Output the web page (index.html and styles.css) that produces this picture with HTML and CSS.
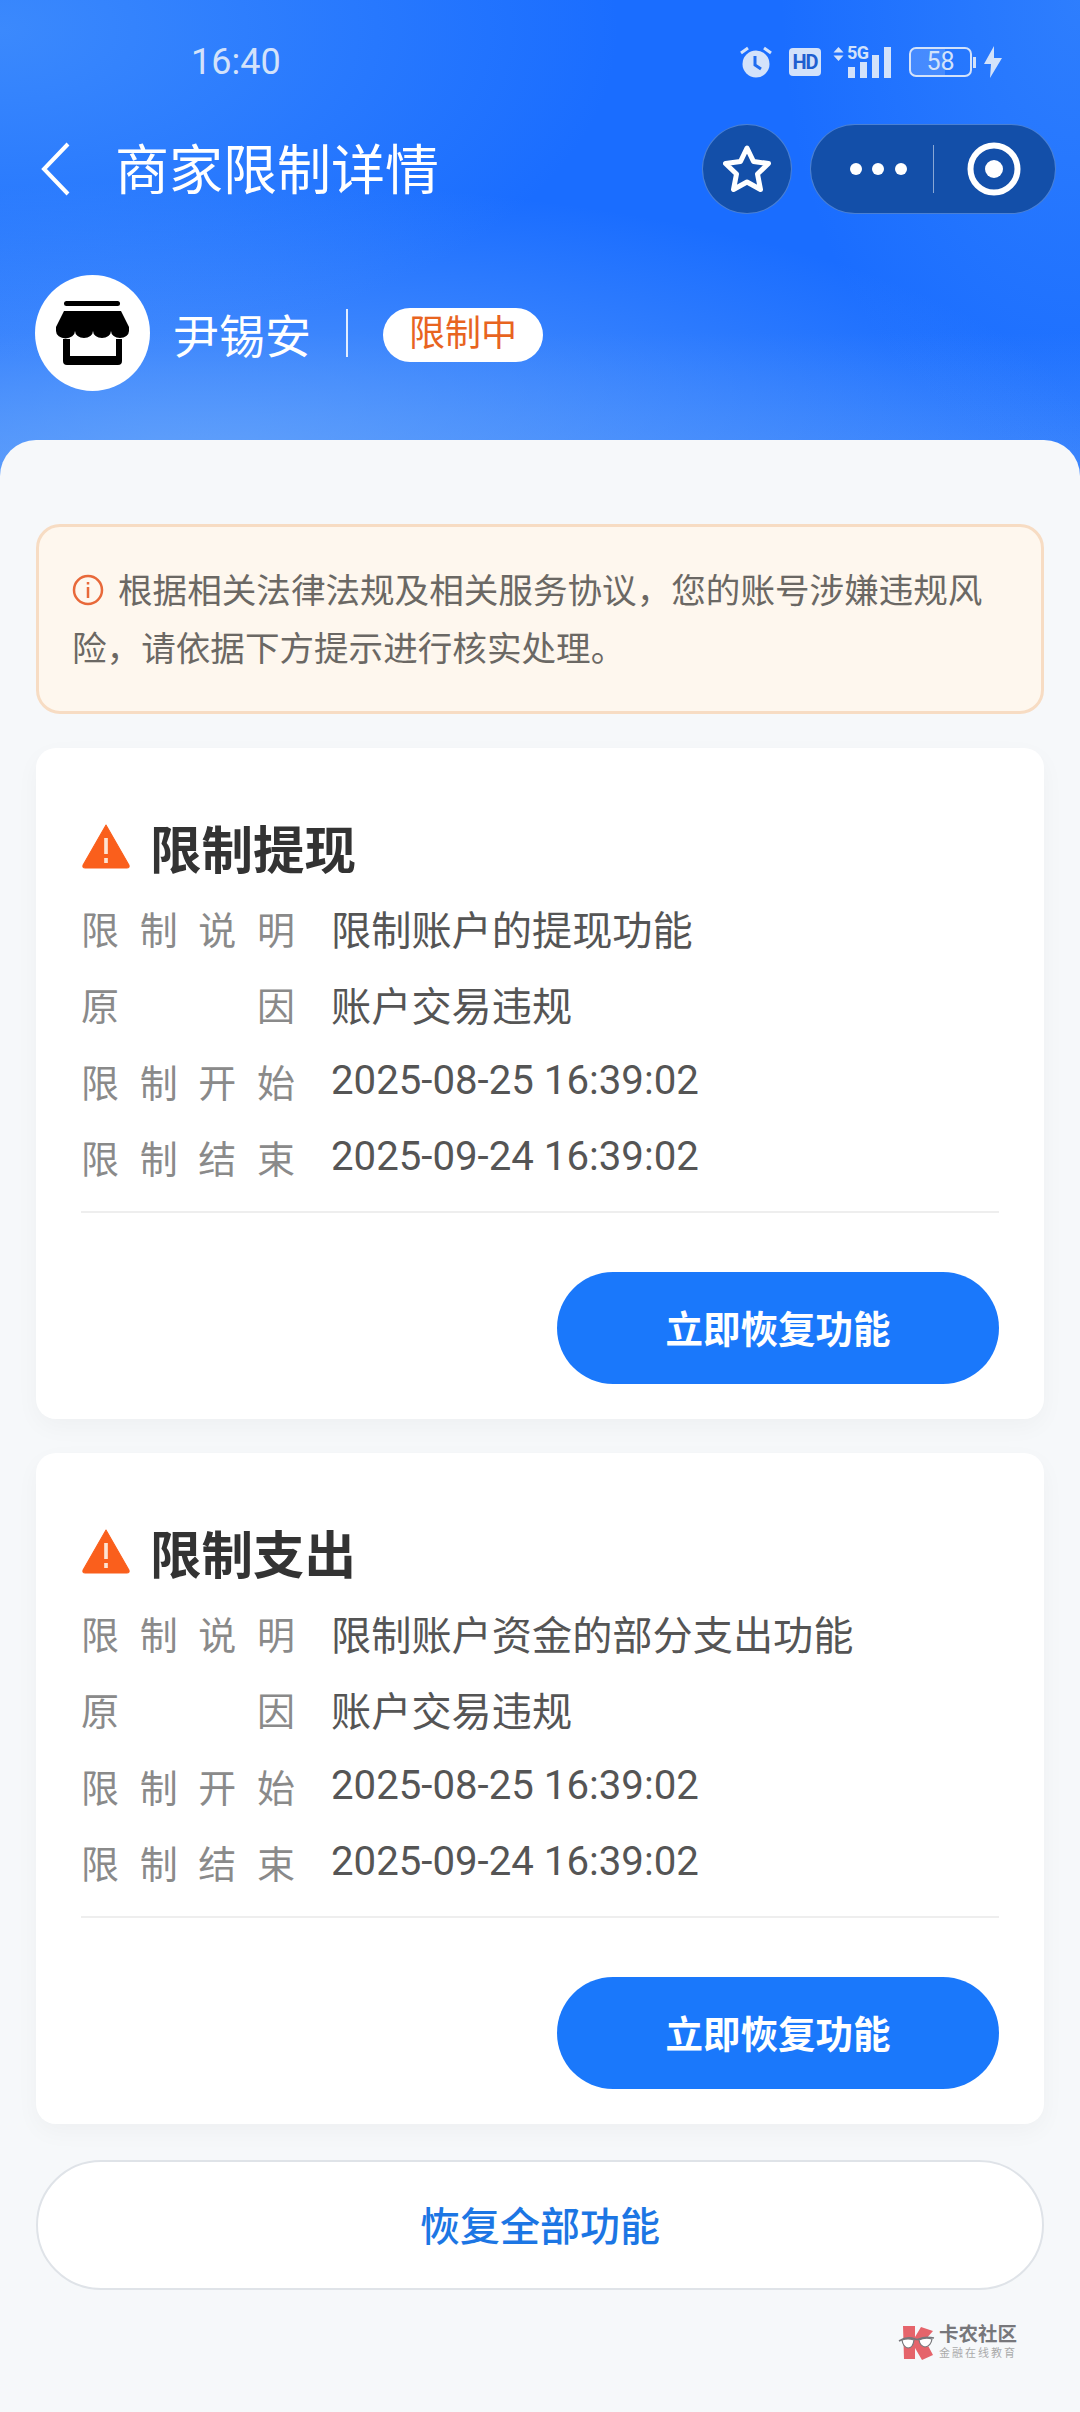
FILE: index.html
```html
<!DOCTYPE html>
<html lang="zh-CN">
<head>
    <meta charset="UTF-8">
    <meta name="viewport" content="width=device-width, initial-scale=1.0">
    <title>商家限制详情</title>
    <link rel="stylesheet" href="styles.css">
</head>
<body>
    <div class="page">
        <header class="top">
            <div class="status-bar">
                <span class="time">16:40</span>
                <div class="status-icons">
                    <svg class="icon-alarm" width="34" height="34" viewBox="0 0 34 34">
                        <circle cx="17" cy="19" r="13.5" fill="#d3e2fa"/>
                        <path d="M16 11v9l6 4" fill="none" stroke="#1f6cf0" stroke-width="3"/>
                        <path d="M2 8l7-5M32 8l-7-5" stroke="#d3e2fa" stroke-width="3" fill="none"/>
                    </svg>
                    <span class="hd">HD</span>
                    <div class="signal">
                        <svg width="11" height="14" viewBox="0 0 11 14">
                            <path d="M5.500 0L10.500 5.500H0.500ZM0.500 8.500H10.500L5.500 14Z" fill="#d3e2fa"/>
                        </svg>
                        <span class="five-g">5G</span>
                        <svg class="bars" width="44" height="31" viewBox="0 0 44 31">
                            <rect x="1" y="20" width="7" height="11" fill="#d3e2fa"/>
                            <rect x="13" y="15" width="7" height="16" fill="#d3e2fa"/>
                            <rect x="25" y="8" width="7" height="23" fill="#d3e2fa"/>
                            <rect x="37" y="0" width="7" height="31" fill="#d3e2fa"/>
                        </svg>
                    </div>
                    <div class="battery"><span>58</span></div>
                    <i class="battery-nub"></i>
                    <svg class="bolt" width="20" height="32" viewBox="0 0 20 32">
                        <path d="M11 0L1 18H8L7 32L19 12H11Z" fill="#d3e2fa"/>
                    </svg>
                </div>
            </div>

            <nav class="nav">
                <svg class="back" width="30" height="54" viewBox="0 0 30 54">
                    <path d="M27 2L3 27L27 52" fill="none" stroke="#fff" stroke-width="4"/>
                </svg>
                <h1>商家限制详情</h1>
                <div class="nav-actions">
                    <div class="star-btn">
                        <svg width="48" height="48" viewBox="0 0 48 48">
                            <path d="M24 3L30.500 16.500L45.500 18.500L34.500 29L37.500 44.500L24 37L10.500 44.500L13.500 29L2.500 18.500L17.500 16.500Z" fill="none" stroke="#fff" stroke-width="5" stroke-linejoin="round"/>
                        </svg>
                    </div>
                    <div class="capsule">
                        <div class="capsule-part capsule-dots">
                            <i class="dot"></i><i class="dot"></i><i class="dot"></i>
                        </div>
                        <i class="capsule-line"></i>
                        <div class="capsule-part">
                            <svg width="54" height="54" viewBox="0 0 54 54">
                                <circle cx="27" cy="27" r="23.500" fill="none" stroke="#fff" stroke-width="6"/>
                                <circle cx="27" cy="27" r="9" fill="#fff"/>
                            </svg>
                        </div>
                    </div>
                </div>
            </nav>

            <div class="merchant">
                <div class="avatar">
                    <svg width="115" height="116" viewBox="0 0 115 116">
                        <rect x="29" y="26" width="56" height="5" rx="2.500" fill="#000"/>
                        <path d="M29 36H86L94 52V56A9 7 0 0 1 76 56A9 7 0 0 1 58 56A9 7 0 0 1 40 56A9 7 0 0 1 21 56V52Z" fill="#000"/>
                        <path d="M28 64H35V81H81V64H87V86Q87 90 83 90H32Q28 90 28 86Z" fill="#000"/>
                    </svg>
                </div>
                <span class="merchant-name">尹锡安</span>
                <i class="merchant-line"></i>
                <span class="badge">限制中</span>
            </div>
        </header>

        <main class="sheet">
            <div class="alert">
                <svg class="alert-icon" width="32" height="32" viewBox="0 0 32 32">
                    <circle cx="16" cy="16" r="14" fill="none" stroke="#e8693a" stroke-width="2.500"/>
                    <path d="M16 13V24M16 8V10.500" stroke="#e8693a" stroke-width="2.500" fill="none"/>
                </svg>根据相关法律法规及相关服务协议，您的账号涉嫌违规风险，请依据下方提示进行核实处理。
            </div>

            <section class="card">
                <div class="card-title">
                    <svg width="50" height="46" viewBox="0 0 48 46" preserveAspectRatio="none">
                        <path d="M24 2L46 42Q47 45 44 45H4Q1 45 2 42Z" fill="#fa5f1c" stroke="#fa5f1c" stroke-linejoin="round"/>
                        <path d="M24 15V31M24 35V40" stroke="#fde3d2" stroke-width="3.500" fill="none"/>
                    </svg>
                    <h2>限制提现</h2>
                </div>
                <div class="row"><span class="label">限制说明</span><span class="value">限制账户的提现功能</span></div>
                <div class="row"><span class="label">原因</span><span class="value">账户交易违规</span></div>
                <div class="row"><span class="label">限制开始</span><span class="value">2025-08-25 16:39:02</span></div>
                <div class="row"><span class="label">限制结束</span><span class="value">2025-09-24 16:39:02</span></div>
                <div class="card-foot">
                    <button class="restore-btn">立即恢复功能</button>
                </div>
            </section>

            <section class="card">
                <div class="card-title">
                    <svg width="50" height="46" viewBox="0 0 48 46" preserveAspectRatio="none">
                        <path d="M24 2L46 42Q47 45 44 45H4Q1 45 2 42Z" fill="#fa5f1c" stroke="#fa5f1c" stroke-linejoin="round"/>
                        <path d="M24 15V31M24 35V40" stroke="#fde3d2" stroke-width="3.500" fill="none"/>
                    </svg>
                    <h2>限制支出</h2>
                </div>
                <div class="row"><span class="label">限制说明</span><span class="value">限制账户资金的部分支出功能</span></div>
                <div class="row"><span class="label">原因</span><span class="value">账户交易违规</span></div>
                <div class="row"><span class="label">限制开始</span><span class="value">2025-08-25 16:39:02</span></div>
                <div class="row"><span class="label">限制结束</span><span class="value">2025-09-24 16:39:02</span></div>
                <div class="card-foot">
                    <button class="restore-btn">立即恢复功能</button>
                </div>
            </section>

            <button class="restore-all">恢复全部功能</button>

            <div class="watermark">
                <svg width="38" height="36" viewBox="0 0 38 36">
                    <path d="M5 1H17V12L23 2L35 6L27 15L35 30L24 35L17 23V34H6Z" fill="#e5646b"/>
                    <path d="M1 16Q9 11 17 14Q19 15 21 14Q27 11 36 13" fill="none" stroke="#77777b" stroke-width="1.500"/>
                    <path d="M4 15Q10 13 16 15Q15 23 10 23Q5 22 4 15ZM21 15Q27 12 34 14Q33 21 27 22Q22 21 21 15Z" fill="#fff" stroke="#77777b" stroke-width="1.200"/>
                </svg>
                <div class="watermark-text">
                    <b>卡农社区</b>
                    <small>金融在线教育</small>
                </div>
            </div>
        </main>
    </div>
</body>
</html>
```

FILE: styles.css
```css
* {
    box-sizing: border-box;
}

html,
body {
    margin: 0;
    padding: 0;
}

body {
    width: 1080px;
    height: 2412px;
    overflow: hidden;
    background-color: #f6f8fa;
    font-family: Roboto, "Noto Sans CJK SC", sans-serif;
}

.page {
    display: flex;
    flex-direction: column;
    height: 2412px;
}

/* blue header */
.top {
    height: 490px;
    margin-bottom: -50px;
    padding-bottom: 50px;
    color: #fff;
    background:
        radial-gradient(ellipse 620px 330px at 0 30px, rgba(92, 165, 250, 0.5), rgba(92, 165, 250, 0) 100%),
        radial-gradient(ellipse 300px 460px at 1080px 0, rgba(92, 165, 250, 0.3), rgba(92, 165, 250, 0) 100%),
        radial-gradient(ellipse 900px 280px at 200px 460px, rgba(110, 170, 250, 0.75), rgba(110, 170, 250, 0) 100%),
        linear-gradient(180deg, rgba(90, 155, 250, 0) 68%, rgba(90, 155, 250, 0.6) 100%),
        #1a6dff;
}

.status-bar {
    height: 124px;
    padding-left: 191px;
    padding-right: 77px;
    display: flex;
    align-items: center;
    justify-content: space-between;
    color: #d3e2fa;
}

.time {
    font-size: 36px;
}

.status-icons {
    display: flex;
    align-items: center;
}

.hd {
    width: 32px;
    height: 28px;
    margin-left: 16px;
    border-radius: 4px;
    background: #d3e2fa;
    color: #1f5fd0;
    font-size: 20px;
    font-weight: 700;
    line-height: 28px;
    text-align: center;
    letter-spacing: -1px;
}

.signal {
    width: 60px;
    height: 31px;
    margin-left: 12px;
    display: grid;
    grid-template-columns: 14px 46px;
    position: relative;
}

.five-g {
    font-size: 18px;
    font-weight: 700;
    line-height: 16px;
    height: 16px;
    letter-spacing: -0.5px;
    position: absolute;
    left: 14px;
    top: -2px;
}

.bars {
    grid-column: 2;
}

.battery {
    width: 63px;
    height: 30px;
    margin-left: 16px;
    border: 2px solid #d3e2fa;
    border-radius: 7px;
    background: linear-gradient(90deg, rgba(255, 255, 255, 0.16) 58%, transparent 58%);
    font-size: 25px;
    line-height: 26px;
    text-align: center;
}

.battery-nub {
    width: 3px;
    height: 11px;
    margin-left: 1px;
    background: #d3e2fa;
}

.bolt {
    margin-left: 7px;
}

.nav {
    height: 90px;
    padding-left: 41px;
    display: flex;
    align-items: center;
}

.back {
    flex: none;
}

h1 {
    margin: 0 0 5px 44px;
    font-size: 54px;
    font-weight: 400;
    letter-spacing: 0;
}

.nav-actions {
    margin-left: auto;
    padding-right: 24px;
    display: flex;
    gap: 18px;
}

.star-btn,
.capsule {
    height: 90px;
    border: 1px solid rgba(120, 170, 245, 0.55);
    background: #134fa9;
    display: flex;
    align-items: center;
    justify-content: center;
}

.star-btn {
    width: 90px;
    border-radius: 50%;
}

.capsule {
    width: 246px;
    border-radius: 45px;
}

.capsule-part {
    width: 122px;
    display: flex;
    align-items: center;
    justify-content: center;
    gap: 10.500px;
}

.capsule-dots {
    padding-left: 13px;
}

.dot {
    width: 12px;
    height: 12px;
    border-radius: 50%;
    background: #fff;
}

.capsule-line {
    width: 1px;
    height: 48px;
    background: rgba(255, 255, 255, 0.5);
}

.merchant {
    margin-top: 61px;
    padding-left: 35px;
    display: flex;
    align-items: center;
}

.avatar {
    width: 115px;
    height: 116px;
    border-radius: 50%;
    background: #fff;
}

.merchant-name {
    margin-left: 23px;
    font-size: 46px;
}

.merchant-line {
    width: 2px;
    height: 48px;
    margin-left: 35px;
    background: rgba(255, 255, 255, 0.85);
}

.badge {
    width: 160px;
    height: 54px;
    margin-top: 3px;
    margin-left: 35px;
    border-radius: 27px;
    background: #fff;
    color: #e8641f;
    font-size: 36px;
    line-height: 52px;
    text-align: center;
}

/* grey sheet */
.sheet {
    flex: 1;
    border-radius: 36px 36px 0 0;
    background-color: #f6f8fa;
    padding: 84px 36px 0;
}

.alert {
    height: 190px;
    padding: 35px 33px 0 33px;
    border: 3px solid #f7dcc3;
    border-radius: 24px;
    background: #fef7ee;
    color: #6b6864;
    font-size: 34.600px;
    line-height: 58px;
}

.alert-icon {
    margin-right: 14px;
    vertical-align: -3px;
}

.card {
    margin-top: 34px;
    height: 671px;
    padding: 68px 45px 0;
    border-radius: 20px;
    background: #fff;
    box-shadow: 0 8px 24px rgba(0, 0, 0, 0.035);
}

.card-title {
    height: 60px;
    margin-bottom: 13px;
    display: flex;
    align-items: center;
    gap: 19px;
}

h2 {
    margin: 0;
    color: #333;
    font-size: 51.500px;
    font-weight: 700;
}

.row {
    height: 76.500px;
    display: flex;
    align-items: center;
    font-size: 40.200px;
}

.label {
    width: 214px;
    margin-right: 36px;
    color: #8a8a8a;
    font-size: 38px;
    text-align: justify;
    text-align-last: justify;
}

.value {
    color: #555;
}

.card-foot {
    margin-top: 16px;
    padding-top: 59px;
    border-top: 2px solid #eeeeee;
    display: flex;
    justify-content: flex-end;
}

.restore-btn {
    width: 442px;
    height: 112px;
    padding: 0 0 4px;
    border: none;
    border-radius: 56px;
    background: #1a78fb;
    color: #fff;
    font-family: inherit;
    font-size: 37.500px;
    font-weight: 700;
}

.restore-all {
    display: block;
    width: 100%;
    height: 130px;
    margin-top: 36px;
    padding: 0 0 2px;
    border: 2px solid #dfe3e8;
    border-radius: 65px;
    background: #fff;
    color: #1c76e4;
    font-family: inherit;
    font-size: 40px;
    font-weight: 500;
}

.watermark {
    margin-top: 34px;
    padding-right: 27px;
    display: flex;
    justify-content: flex-end;
    align-items: center;
    gap: 3px;
}

.watermark-text {
    display: flex;
    flex-direction: column;
}

.watermark-text b {
    color: #77777b;
    font-size: 19.500px;
    line-height: 22px;
}

.watermark-text small {
    color: #aaaaaa;
    font-size: 11px;
    line-height: 15px;
    letter-spacing: 2px;
}
```
